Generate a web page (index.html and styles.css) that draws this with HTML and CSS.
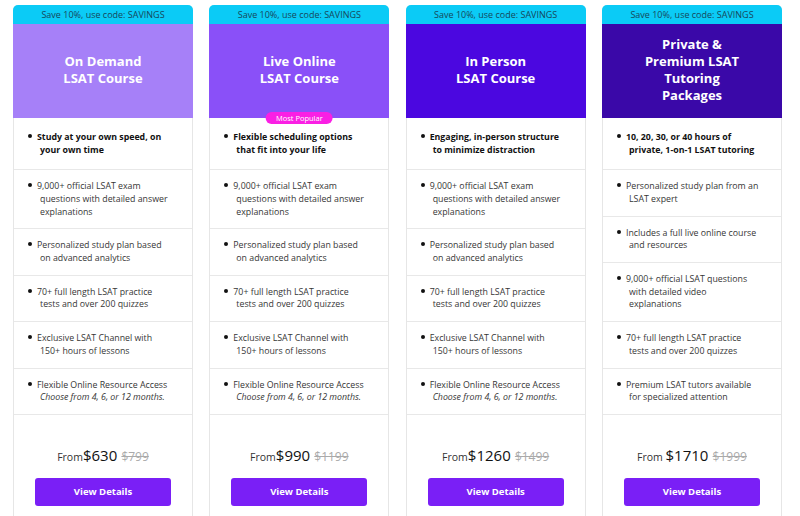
FILE: index.html
```html
<!DOCTYPE html>
<html lang="en">
<head>
<meta charset="utf-8">
<title>LSAT Courses</title>
<link rel="stylesheet" href="styles.css">
</head>
<body>
<div class="plans">
  <div class="card">
    <div class="promo">Save 10%, use code: SAVINGS</div>
    <div class="head head-1"><h2>On Demand<br>LSAT Course</h2></div>
    <ul class="features">
      <li class="feat strong"><span class="dot"></span>Study at your own speed, on<br>your own time</li>
      <li class="feat"><span class="dot"></span>9,000+ official LSAT exam<br>questions with detailed answer<br>explanations</li>
      <li class="feat"><span class="dot"></span>Personalized study plan based<br>on advanced analytics</li>
      <li class="feat"><span class="dot"></span>70+ full length LSAT practice<br>tests and over 200 quizzes</li>
      <li class="feat"><span class="dot"></span>Exclusive LSAT Channel with<br>150+ hours of lessons</li>
      <li class="feat"><span class="dot"></span>Flexible Online Resource Access<br><em>Choose from 4, 6, or 12 months.</em></li>
    </ul>
    <div class="foot">
      <p class="price"><span class="from">From</span><span class="amount">$630</span> <s class="old">$799</s></p>
      <a class="btn" href="#">View Details</a>
    </div>
  </div>

  <div class="card">
    <div class="promo">Save 10%, use code: SAVINGS</div>
    <div class="head head-2"><h2>Live Online<br>LSAT Course</h2><span class="badge">Most Popular</span></div>
    <ul class="features">
      <li class="feat strong"><span class="dot"></span>Flexible scheduling options<br>that fit into your life</li>
      <li class="feat"><span class="dot"></span>9,000+ official LSAT exam<br>questions with detailed answer<br>explanations</li>
      <li class="feat"><span class="dot"></span>Personalized study plan based<br>on advanced analytics</li>
      <li class="feat"><span class="dot"></span>70+ full length LSAT practice<br>tests and over 200 quizzes</li>
      <li class="feat"><span class="dot"></span>Exclusive LSAT Channel with<br>150+ hours of lessons</li>
      <li class="feat"><span class="dot"></span>Flexible Online Resource Access<br><em>Choose from 4, 6, or 12 months.</em></li>
    </ul>
    <div class="foot">
      <p class="price"><span class="from">From</span><span class="amount">$990</span> <s class="old">$1199</s></p>
      <a class="btn" href="#">View Details</a>
    </div>
  </div>

  <div class="card">
    <div class="promo">Save 10%, use code: SAVINGS</div>
    <div class="head head-3"><h2>In Person<br>LSAT Course</h2></div>
    <ul class="features">
      <li class="feat strong"><span class="dot"></span>Engaging, in-person structure<br>to minimize distraction</li>
      <li class="feat"><span class="dot"></span>9,000+ official LSAT exam<br>questions with detailed answer<br>explanations</li>
      <li class="feat"><span class="dot"></span>Personalized study plan based<br>on advanced analytics</li>
      <li class="feat"><span class="dot"></span>70+ full length LSAT practice<br>tests and over 200 quizzes</li>
      <li class="feat"><span class="dot"></span>Exclusive LSAT Channel with<br>150+ hours of lessons</li>
      <li class="feat"><span class="dot"></span>Flexible Online Resource Access<br><em>Choose from 4, 6, or 12 months.</em></li>
    </ul>
    <div class="foot">
      <p class="price"><span class="from">From</span><span class="amount">$1260</span> <s class="old">$1499</s></p>
      <a class="btn" href="#">View Details</a>
    </div>
  </div>

  <div class="card">
    <div class="promo">Save 10%, use code: SAVINGS</div>
    <div class="head head-4"><h2>Private &amp;<br>Premium LSAT<br>Tutoring<br>Packages</h2></div>
    <ul class="features">
      <li class="feat strong"><span class="dot"></span>10, 20, 30, or 40 hours of<br>private, 1-on-1 LSAT tutoring</li>
      <li class="feat"><span class="dot"></span>Personalized study plan from an<br>LSAT expert</li>
      <li class="feat"><span class="dot"></span>Includes a full live online course<br>and resources</li>
      <li class="feat"><span class="dot"></span>9,000+ official LSAT questions<br>with detailed video<br>explanations</li>
      <li class="feat"><span class="dot"></span>70+ full length LSAT practice<br>tests and over 200 quizzes</li>
      <li class="feat"><span class="dot"></span>Premium LSAT tutors available<br>for specialized attention</li>
    </ul>
    <div class="foot">
      <p class="price"><span class="from">From </span><span class="amount">$1710</span> <s class="old">$1999</s></p>
      <a class="btn" href="#">View Details</a>
    </div>
  </div>
</div>
</body>
</html>
```

FILE: styles.css
```css
* { box-sizing: border-box; }

html, body {
  margin: 0;
  padding: 0;
  background: #ffffff;
  font-family: "Open Sans", "Noto Sans", sans-serif;
  color: #333;
}

.plans {
  display: grid;
  grid-template-columns: repeat(4, 180px);
  column-gap: 16.33px;
  padding: 5px 0 0 13px;
}

.card {
  border: 1px solid #e6e6e6;
  border-top: none;
  border-radius: 5px 5px 0 0;
  background: #fff;
  display: flex;
  flex-direction: column;
}

.promo {
  background: #0bcbf6;
  color: #17475a;
  font-size: 9px;
  height: 19px;
  line-height: 19px;
  text-align: center;
  border-radius: 5px 5px 0 0;
  margin: 0 -1px;
}

.head {
  position: relative;
  height: 94px;
  display: flex;
  align-items: center;
  justify-content: center;
  margin: 0 -1px;
  padding-bottom: 2px;
}

.head h2 {
  margin: 0;
  color: #fff;
  font-size: 13px;
  line-height: 17px;
  font-weight: 700;
  text-align: center;
}

.head-1 { background: #a680f8; }
.head-2 { background: #8a50f8; }
.head-3 { background: #4b07e0; }
.head-4 { background: #3a08a8; }

.badge {
  position: absolute;
  left: 50%;
  bottom: -6px;
  transform: translateX(-50%);
  background: #fa1fe4;
  color: #fff;
  font-size: 7.5px;
  line-height: 12px;
  height: 12px;
  padding: 0 10px;
  border-radius: 6px;
  white-space: nowrap;
}

.features {
  list-style: none;
  margin: 0;
  padding: 0;
  flex: 1;
}

.feat {
  border-bottom: 1px solid #e8e8e8;
  padding: 10.15px 8px 10.15px 26px;
  text-indent: -12px;
  font-size: 8.8px;
  line-height: 12.6px;
  color: #363636;
  white-space: nowrap;
}

.feat em { font-style: italic; }

.feat.strong {
  font-weight: 700;
  color: #111;
  padding-top: 13px;
  padding-bottom: 13px;
}

.dot {
  display: inline-block;
  width: 4px;
  height: 4px;
  border-radius: 50%;
  background: #111;
  margin-right: 5px;
  vertical-align: 2px;
}

.foot {
  padding: 30px 21px 14px;
  text-align: center;
}

.price {
  margin: 0 0 11px;
  line-height: 20px;
  color: #222;
  white-space: nowrap;
}

.from {
  font-size: 10.5px;
  color: #333;
}

.amount {
  font-size: 15px;
  color: #111;
}

.old {
  font-size: 12px;
  color: #aaa;
}

.btn {
  display: block;
  height: 28px;
  line-height: 28px;
  background: #7a1ff6;
  color: #fff;
  font-size: 9.5px;
  font-weight: 700;
  text-decoration: none;
  border-radius: 3px;
}
```
